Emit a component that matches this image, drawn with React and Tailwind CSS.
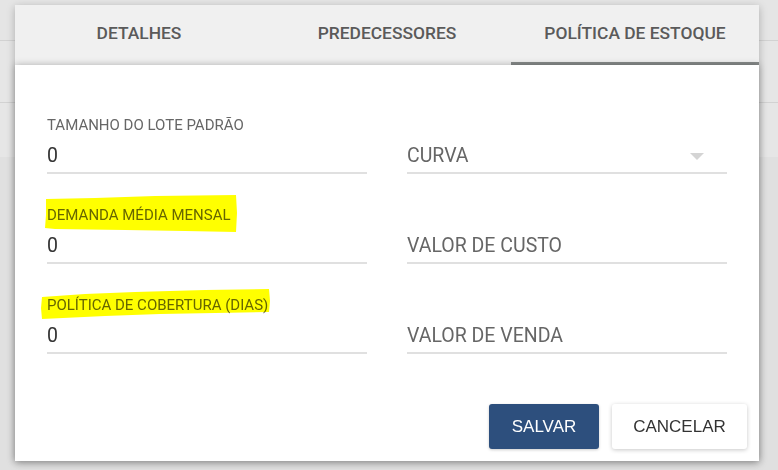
import React from "react";

const roboto = { fontFamily: "Roboto, 'Noto Sans', sans-serif" };

function Field({ label, value, placeholder, select }) {
  return (
    <div className="flex flex-col">
      <div className="h-[16px] text-[15px] leading-[16px] text-[#666] whitespace-nowrap">{label}</div>
      <div className="relative mt-[11px] h-[30px] pb-[4px] border-b-2 border-[#e0e0e0] text-[19.5px] leading-[24px]">
        {value !== undefined ? (
          <span className="text-[#333]">{value}</span>
        ) : (
          <span className="text-[#666]">{placeholder}</span>
        )}
        {select && (
          <svg className="absolute right-[23px] top-[9px]" width="14" height="7" viewBox="0 0 14 7">
            <polygon points="0,0 14,0 7,7" fill="#d4d4d4" />
          </svg>
        )}
      </div>
    </div>
  );
}

export default function App() {
  return (
    <div className="relative w-[778px] h-[470px] overflow-hidden bg-[#e2e2e2] flex flex-col" style={roboto}>
      <div className="h-[41px] bg-[#e5e5e5] border-b border-[#d2d2d2]" />
      <div className="h-[62px] bg-[#e6e6e6] border-b border-[#d2d2d2]" />
      <div className="h-[54px] bg-[#e6e6e6]" />
      <div className="flex-1 bg-[#e0e0e0]" />

      <div className="absolute left-[15px] top-[5px] w-[744px] h-[456px] flex flex-col shadow-[0_2px_8px_rgba(0,0,0,0.25)]">
        <div className="h-[60px] bg-[#f0f0f0] grid grid-cols-3">
          {["DETALHES", "PREDECESSORES", "POLÍTICA DE ESTOQUE"].map((t, i) => (
            <div
              key={t}
              className={
                "flex items-center justify-center text-[17.4px] font-medium text-[#5a5a5a] border-b-[3px] " +
                (i === 2 ? "border-[#878b8a]" : "border-transparent")
              }
            >
              {t}
            </div>
          ))}
        </div>

        <div className="relative z-10 flex-1 bg-white shadow-[0_0_7px_rgba(0,0,0,0.28)] flex flex-col pt-[52px]">
          <div className="grid grid-cols-2 gap-x-[40px] gap-y-[33px] px-[32px]">
            <Field label="TAMANHO DO LOTE PADRÃO" value="0" />
            <Field label="" placeholder="CURVA" select />
            <Field label="DEMANDA MÉDIA MENSAL" value="0" />
            <Field label="" placeholder="VALOR DE CUSTO" />
            <Field label="POLÍTICA DE COBERTURA (DIAS)" value="0" />
            <Field label="" placeholder="VALOR DE VENDA" />
          </div>

          <div className="mt-auto flex justify-end gap-[13px] pr-[12px] pb-[12px]" style={{ fontFamily: "'Liberation Sans', Arial, sans-serif" }}>
            <button className="w-[110px] h-[45px] rounded-[3px] bg-[#2d4f7d] text-white text-[17px] shadow-[0_1px_3px_rgba(0,0,0,0.2)]">
              SALVAR
            </button>
            <button className="w-[135px] h-[45px] rounded-[3px] bg-white text-[#333] text-[17px] shadow-[0_1px_4px_rgba(0,0,0,0.22)]">
              CANCELAR
            </button>
          </div>

          <svg className="absolute inset-0 pointer-events-none mix-blend-multiply" width="744" height="396" viewBox="0 0 744 396">
            <polygon
              points="31,134 80,133 140,131 221,130 222,148 221,167 170,166 110,165 40,164 30,163 31,150"
              fill="#ffff00"
            />
            <polygon
              points="27,232 70,229 120,227 190,225 254,224 255,236 254,247 200,248 145,249 90,251 27,254 26,243"
              fill="#ffff00"
            />
          </svg>
        </div>
      </div>
    </div>
  );
}
